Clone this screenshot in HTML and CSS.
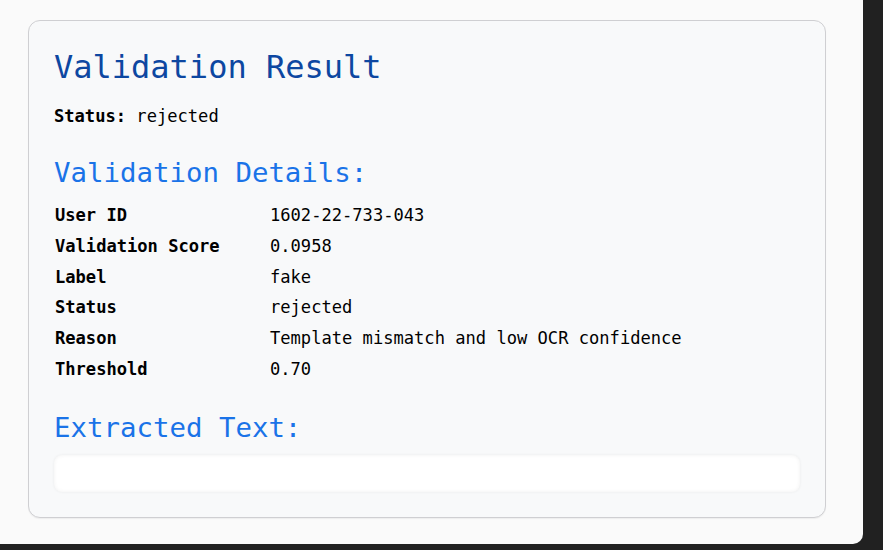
FILE: index.html
```html
<!DOCTYPE html>
<html lang="en">
<head>
<meta charset="utf-8">
<title>Validation Result</title>
<link rel="stylesheet" href="styles.css">
</head>
<body>
<div class="panel">
  <div class="card">
    <h1 class="title">Validation Result</h1>
    <p class="status"><strong>Status:</strong> rejected</p>
    <h2 class="subtitle details-title">Validation Details:</h2>
    <table class="details">
      <tbody>
        <tr><th>User ID</th><td>1602-22-733-043</td></tr>
        <tr><th>Validation Score</th><td>0.0958</td></tr>
        <tr><th>Label</th><td>fake</td></tr>
        <tr><th>Status</th><td>rejected</td></tr>
        <tr><th>Reason</th><td>Template mismatch and low OCR confidence</td></tr>
        <tr><th>Threshold</th><td>0.70</td></tr>
      </tbody>
    </table>
    <h2 class="subtitle extracted-title">Extracted Text:</h2>
    <div class="extracted"></div>
  </div>
</div>
</body>
</html>
```

FILE: styles.css
```css
html, body {
  margin: 0;
  padding: 0;
}

body {
  background: #212121;
  font-family: "DejaVu Sans Mono", "Liberation Mono", monospace;
  color: #000;
  width: 883px;
  height: 550px;
  overflow: hidden;
}

.panel {
  width: 863px;
  height: 544px;
  background: #fafafa;
  border-bottom-right-radius: 10px;
  box-sizing: border-box;
  padding: 20px 0 0 28px;
}

.card {
  width: 798px;
  height: 498px;
  box-sizing: border-box;
  background: #f8f9fa;
  border: 1px solid #cfcfd2;
  border-radius: 12px;
  padding: 26px 25px 25px 25px;
  box-shadow: 0 1px 1px rgba(0, 0, 0, 0.05);
}

.title {
  margin: 0;
  font-size: 32px;
  line-height: 40px;
  font-weight: normal;
  color: #0d47a1;
}

.status {
  margin: 17px 0 0 0;
  font-size: 17.1px;
  line-height: 24px;
}

.status strong {
  font-weight: bold;
}

.subtitle {
  margin: 0;
  font-size: 27.4px;
  line-height: 32px;
  font-weight: normal;
  color: #1a73e8;
}

.details-title {
  margin-top: 29px;
}

.details {
  margin-top: 11px;
  border-collapse: collapse;
  font-size: 17.1px;
}

.details th,
.details td {
  padding: 0;
  line-height: 30.8px;
  text-align: left;
  vertical-align: top;
  white-space: nowrap;
}

.details th {
  width: 215px;
  padding-left: 1px;
  font-weight: bold;
}

.extracted-title {
  margin-top: 27px;
}

.extracted {
  margin-top: 11px;
  height: 37px;
  background: #ffffff;
  border-radius: 8px;
  box-shadow: 0 0 3px rgba(0, 0, 0, 0.06), inset 0 0 4px rgba(0, 0, 0, 0.06);
}
```
